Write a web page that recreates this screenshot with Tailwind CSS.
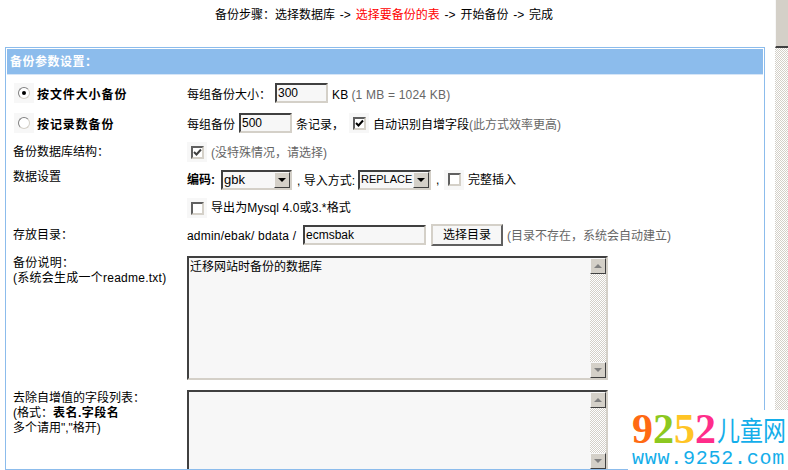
<!DOCTYPE html>
<html lang="zh-CN">
<head>
  <meta charset="UTF-8">
  <title>备份参数设置</title>
  <script src="https://cdn.jsdelivr.net/npm/@tailwindcss/browser@4"></script>
</head>
<body class="h-[470px] w-[788px] overflow-hidden bg-white text-black text-[12px] leading-[14px] font-['Liberation_Sans','Noto_Sans_CJK_SC',sans-serif]">
  <div class="relative flex h-[470px]">
    <!-- page -->
    <div class="w-[775px] shrink-0 pl-[5px] pr-[10px]">
      <p class="h-[42px] pt-[8px] pl-[210px]">备份步骤：选择数据库 <span class="mx-[1.5px]">-&gt;</span> <span class="text-[#ff0000]">选择要备份的表</span> <span class="mx-[1.5px]">-&gt;</span> 开始备份 <span class="mx-[1.5px]">-&gt;</span> 完成</p>

      <div class="mt-[5px] h-[423px] overflow-hidden border border-[#8cbcec] p-px">
        <div class="flex h-[26px] items-center border-b border-[#d5e5f7] bg-[#8cbcec] pl-[3px] font-bold tracking-[0.5px] text-white">备份参数设置：</div>

        <div class="pl-[6px]">
          <!-- 按文件大小 -->
          <div class="flex h-[36px] items-center">
            <div class="flex w-[174px] items-center pl-px">
              <span class="flex size-[20px] items-center justify-center bg-[#f7f7f7]">
                <span class="flex size-[12px] items-center justify-center rounded-full border border-[#808080] border-r-[#d4d0c8] border-b-[#d4d0c8] bg-white"><span class="size-[4px] rounded-full bg-black"></span></span>
              </span>
              <b class="ml-[3px] pt-[3px] tracking-[0.9px]">按文件大小备份</b>
            </div>
            <span class="w-[88px] pt-[3px]">每组备份大小：</span>
            <input value="300" class="h-[20px] w-[53px] border-2 border-[#404040] border-r-[#d4d0c8] border-b-[#d4d0c8] bg-[#f7f7f7] pl-px">
            <span class="ml-[4px] pt-[3px] tracking-[0.2px]">KB</span><span class="ml-[3px] pt-[3px] tracking-[0.2px] text-[#666666]">(1 MB = 1024 KB)</span>
          </div>
          <!-- 按记录数 -->
          <div class="flex h-[24px] items-center">
            <div class="flex w-[174px] items-center pl-px">
              <span class="flex size-[20px] items-center justify-center bg-[#f7f7f7]">
                <span class="size-[12px] rounded-full border border-[#808080] border-r-[#d4d0c8] border-b-[#d4d0c8] bg-white"></span>
              </span>
              <b class="ml-[3px] pt-[3px] tracking-[0.9px]">按记录数备份</b>
            </div>
            <span class="w-[52px] pt-[3px]">每组备份</span>
            <input value="500" class="h-[20px] w-[53px] border-2 border-[#404040] border-r-[#d4d0c8] border-b-[#d4d0c8] bg-[#f7f7f7] pl-px">
            <span class="ml-[4px] w-[53px] pt-[3px]">条记录，</span>
            <span class="flex size-[20px] items-center justify-center bg-[#f7f7f7]">
              <span class="flex size-[13px] items-center justify-center border-2 border-[#606060] border-r-[#d4d0c8] border-b-[#d4d0c8] bg-white">
                <svg width="9" height="9" viewBox="0 0 9 9"><path d="M1 4l2.5 2.5L8 1.5" fill="none" stroke="#000" stroke-width="2"/></svg>
              </span>
            </span>
            <span class="ml-[4px] pt-[3px]">自动识别自增字段<span class="text-[#666666]">(此方式效率更高)</span></span>
          </div>
          <!-- 结构 -->
          <div class="flex h-[34px] items-center">
            <span class="w-[174px]">备份数据库结构：</span>
            <span class="flex size-[20px] items-center justify-center bg-[#f7f7f7]">
              <span class="flex size-[13px] items-center justify-center border-2 border-[#606060] border-r-[#d4d0c8] border-b-[#d4d0c8] bg-white">
                <svg width="9" height="9" viewBox="0 0 9 9"><path d="M1 4l2.5 2.5L8 1.5" fill="none" stroke="#404040" stroke-width="2"/></svg>
              </span>
            </span>
            <span class="ml-[4px] pt-px text-[#666666]">(没特殊情况，请选择)</span>
          </div>
          <!-- 数据设置 -->
          <div class="flex h-[21px] items-center">
            <span class="mb-[5px] w-[174px]">数据设置</span>
            <b class="w-[34px]">编码:</b>
            <div class="flex h-[20px] w-[71px] border-2 border-[#404040] border-r-[#d4d0c8] border-b-[#d4d0c8] bg-[#f7f7f7]">
              <span class="flex-1 pl-px text-[13px] leading-[15px]">gbk</span>
              <span class="flex w-[16px] items-center justify-center border border-[#f7f7f7] border-r-[#404040] border-b-[#404040] bg-[#d4d0c8]"><span class="border-x-[4px] border-t-[4px] border-x-transparent border-t-black"></span></span>
            </div>
            <span class="ml-[5px] w-[61px] pt-[3px]">, 导入方式:</span>
            <div class="flex h-[20px] w-[73px] border-2 border-[#404040] border-r-[#d4d0c8] border-b-[#d4d0c8] bg-[#f7f7f7]">
              <span class="flex-1 pl-px text-[11px] leading-[15px]">REPLACE</span>
              <span class="flex w-[16px] items-center justify-center border border-[#f7f7f7] border-r-[#404040] border-b-[#404040] bg-[#d4d0c8]"><span class="border-x-[4px] border-t-[4px] border-x-transparent border-t-black"></span></span>
            </div>
            <span class="ml-[5px] w-[8px]">,</span>
            <span class="flex size-[20px] items-center justify-center bg-[#f7f7f7]">
              <span class="size-[13px] border-2 border-[#606060] border-r-[#d4d0c8] border-b-[#d4d0c8] bg-white"></span>
            </span>
            <span class="ml-[4px] pt-px">完整插入</span>
          </div>
          <!-- 导出 -->
          <div class="flex h-[34px] items-center pl-[174px] pt-[2px]">
            <span class="flex size-[20px] items-center justify-center bg-[#f7f7f7]">
              <span class="size-[13px] border-2 border-[#606060] border-r-[#d4d0c8] border-b-[#d4d0c8] bg-white"></span>
            </span>
            <span class="ml-[4px] tracking-[0.1px]">导出为Mysql 4.0或3.*格式</span>
          </div>
          <!-- 存放目录 -->
          <div class="flex h-[22px] items-center">
            <span class="w-[174px]">存放目录：</span>
            <span class="w-[116px] pt-px tracking-[0.2px]">admin/ebak/ bdata /</span>
            <input value="ecmsbak" class="h-[20px] w-[123px] border-2 border-[#404040] border-r-[#d4d0c8] border-b-[#d4d0c8] bg-[#f7f7f7] pl-px">
            <button class="ml-[5px] h-[22px] w-[72px] border-2 border-[#d4d0c8] border-r-[#606060] border-b-[#606060] bg-[#f7f7f7]">选择目录</button>
            <span class="ml-[4px] pt-px text-[#666666]">(目录不存在，系统会自动建立)</span>
          </div>
          <!-- 备份说明 -->
          <div class="flex h-[144px] pt-[10px]">
            <p class="w-[174px] leading-[15px] tracking-[0.25px]">备份说明：<br>(系统会生成一个readme.txt)</p>
            <div class="flex h-[124px] w-[421px] border-2 border-[#404040] border-r-[#d4d0c8] border-b-[#d4d0c8] bg-[#f7f7f7]">
              <div class="flex-1 pl-px pt-[2px]">迁移网站时备份的数据库</div>
              <div class="flex w-[16px] flex-col justify-between bg-[repeating-conic-gradient(#d4d0c8_0_25%,#fff_0_50%)] bg-[length:2px_2px]">
                <span class="flex h-[16px] items-center justify-center border border-[#f7f7f7] border-r-[#404040] border-b-[#404040] bg-[#d4d0c8]"><span class="border-x-[4px] border-b-[4px] border-x-transparent border-b-[#808080]"></span></span>
                <span class="flex h-[16px] items-center justify-center border border-[#f7f7f7] border-r-[#404040] border-b-[#404040] bg-[#d4d0c8]"><span class="border-x-[4px] border-t-[4px] border-x-transparent border-t-[#808080]"></span></span>
              </div>
            </div>
          </div>
          <!-- 去除自增 -->
          <div class="flex">
            <p class="w-[174px] pt-px leading-[15px]">去除自增值的字段列表：<br>(格式：<b class="tracking-[0.5px]">表名.字段名</b><br>多个请用","格开)</p>
            <div class="flex h-[79px] w-[421px] border-2 border-b-0 border-[#404040] border-r-[#d4d0c8] bg-[#f7f7f7]">
              <div class="flex-1"></div>
              <div class="flex h-[77px] w-[16px] flex-col justify-between bg-[repeating-conic-gradient(#d4d0c8_0_25%,#fff_0_50%)] bg-[length:2px_2px]">
                <span class="flex h-[16px] items-center justify-center border border-[#f7f7f7] border-r-[#404040] border-b-[#404040] bg-[#d4d0c8]"><span class="border-x-[4px] border-b-[4px] border-x-transparent border-b-[#808080]"></span></span>
                <span class="flex h-[16px] items-center justify-center border border-[#f7f7f7] border-r-[#404040] border-b-[#404040] bg-[#d4d0c8]"><span class="border-x-[4px] border-t-[4px] border-x-transparent border-t-[#808080]"></span></span>
              </div>
            </div>
          </div>
        </div>
      </div>
    </div>

    <!-- page scrollbar -->
    <div class="w-[13px] bg-[repeating-conic-gradient(#d4d0c8_0_25%,#fff_0_50%)] bg-[length:2px_2px]">
      <div class="h-[48px] border-l border-b-2 border-[#f7f7f7] border-b-[#404040] bg-[#d4d0c8]"></div>
    </div>

    <!-- watermark -->
    <div class="absolute left-[628px] top-[410px] h-[60px] w-[160px] whitespace-nowrap bg-white pl-[4px]">
      <div class="-mt-[2px] flex h-[42px] items-center text-[42px] leading-[42px] font-bold font-['Liberation_Serif',serif]">
        <span class="text-[#ff6a13]">9</span><span class="text-[#8cc820]">2</span><span class="text-[#ffc425]">5</span><span class="text-[#ff2d8a]">2</span>
        <span class="ml-px inline-block scale-y-[1.2] text-[23px] leading-[34px] font-normal text-[#14aeea] font-['Noto_Sans_CJK_SC',sans-serif]">儿童网</span>
      </div>
      <div class="mt-px h-[16px] text-[20px] leading-[16px] tracking-[0.75px] text-[#14aeea] font-['Liberation_Mono',monospace]">www.9252.com</div>
    </div>
  </div>
</body>
</html>
